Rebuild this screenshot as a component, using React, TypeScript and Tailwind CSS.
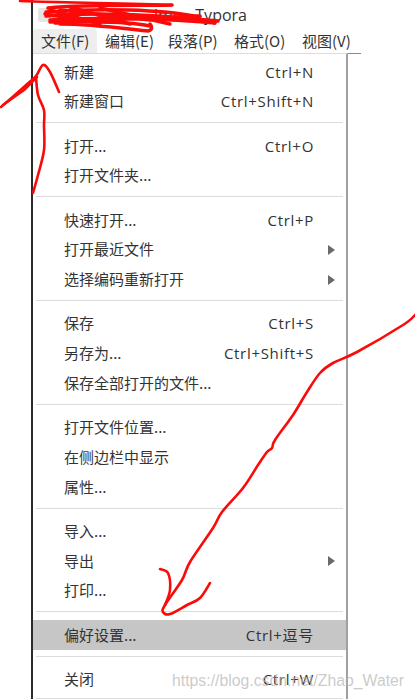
const font = { fontFamily: '"Noto Sans CJK SC", "Open Sans", sans-serif' };

type Row = { label: string; key?: string; sub?: boolean; active?: boolean };

const groups: Row[][] = [
  [{ label: "新建", key: "Ctrl+N" }, { label: "新建窗口", key: "Ctrl+Shift+N" }],
  [{ label: "打开...", key: "Ctrl+O" }, { label: "打开文件夹..." }],
  [{ label: "快速打开...", key: "Ctrl+P" }, { label: "打开最近文件", sub: true }, { label: "选择编码重新打开", sub: true }],
  [{ label: "保存", key: "Ctrl+S" }, { label: "另存为...", key: "Ctrl+Shift+S" }, { label: "保存全部打开的文件..." }],
  [{ label: "打开文件位置..." }, { label: "在侧边栏中显示" }, { label: "属性..." }],
  [{ label: "导入..." }, { label: "导出", sub: true }, { label: "打印..." }],
  [{ label: "偏好设置...", key: "Ctrl+逗号", active: true }],
  [{ label: "关闭", key: "Ctrl+W" }],
];

const menus = [
  { t: "文件(F)", c: "w-[64px] pl-[8px] bg-[#eeeeee] rounded-t-[3px]" },
  { t: "编辑(E)", c: "w-[63px] pl-[8px]" },
  { t: "段落(P)", c: "w-[65px] pl-[8px]" },
  { t: "格式(O)", c: "w-[68px] pl-[9px]" },
  { t: "视图(V)", c: "w-[68px] pl-[9px]" },
];

function smooth(p: number[][]) {
  let d = `M${p[0][0]} ${p[0][1]}`;
  for (let i = 0; i < p.length - 1; i++) {
    const a = p[Math.max(i - 1, 0)], b = p[i], c = p[i + 1], e = p[Math.min(i + 2, p.length - 1)];
    d += `C${b[0] + (c[0] - a[0]) / 6} ${b[1] + (c[1] - a[1]) / 6} ${c[0] - (e[0] - b[0]) / 6} ${c[1] - (e[1] - b[1]) / 6} ${c[0]} ${c[1]}`;
  }
  return d;
}

const bigArrow = [[415, 315], [403, 325], [357, 352], [333, 363], [320, 373], [307, 392], [293, 415], [275, 440], [272, 448], [267, 452], [258, 465], [243, 488], [222, 512], [213, 528], [190, 562], [182, 580], [165, 605], [163, 612], [170, 614], [187, 605], [200, 598], [210, 583]];
const bigHead = [[160, 569], [168, 573], [170, 590], [165, 605]];
const leftShaft = [[36, 77], [38, 95], [44, 110], [44, 125], [44, 150], [38, 175], [33, 193]];
const leftHead = [[1, 107], [25, 86], [36, 76], [43, 65], [50, 72], [59, 92]];

function MenuRow({ r }: { r: Row }) {
  return (
    <div className={`h-[29.7px] flex items-center pl-[31px] pr-[32px] relative ${r.active ? "bg-[#c6c6c6]" : ""}`}>
      <span className="flex-1 whitespace-nowrap">{r.label}</span>
      {r.key && <span className="whitespace-nowrap tracking-[0.7px]" style={{ fontFamily: '"Open Sans", "Noto Sans CJK SC", sans-serif' }}>{r.key}</span>}
      {r.sub && <span className="absolute right-[11px] top-[10px] w-0 h-0 border-y-[5px] border-y-transparent border-l-[7px] border-l-[#6a6a6a]" />}
    </div>
  );
}

export default function App() {
  return (
    <div className="w-[415px] h-[699px] bg-white overflow-hidden relative text-[15px] text-[#333333]" style={font}>
      <div className="ml-[31px] w-[384px] h-[699px] border-l-[2px] border-[#2b2b2b] flex flex-col">
        <div className="h-[29px] flex items-center pl-[5px] shrink-0">
          <div className="w-[13px] h-[14px] bg-[#e4e4e4] rounded-[2px]" />
          <span className="ml-[10px] pl-[93px] whitespace-nowrap text-[16px]" style={{ fontFamily: '"Open Sans", sans-serif' }}>ime - Typora</span>
        </div>
        <div className="h-[25px] w-[328px] shrink-0 flex border-b border-[#8a8a8a]">
          {menus.map((m) => (
            <div key={m.t} className={`h-[24px] flex items-center whitespace-nowrap ${m.c}`}>{m.t}</div>
          ))}
        </div>
        <div className="w-[315px] flex-1 min-h-0 -mt-[1px] bg-white border-t border-[#dddddd] border-r-[2px] border-r-[#a0a0a0] pt-[3px] overflow-hidden">
          {groups.map((g, i) => (
            <div key={i}>
              {i > 0 && (
                <div className="h-[14.7px] px-[3px] pt-[6px]">
                  <div className="h-[1px] bg-[#dcdcdc]" />
                </div>
              )}
              {g.map((r) => (
                <MenuRow key={r.label} r={r} />
              ))}
            </div>
          ))}
          <div className="h-[14.7px] px-[3px] pt-[4px]">
            <div className="h-[1px] bg-[#dcdcdc]" />
          </div>
        </div>
      </div>

      <svg className="absolute left-0 top-0 pointer-events-none" width="415" height="699" fill="none" stroke="#fb0a0a" strokeLinecap="round" strokeLinejoin="round">
        <g strokeWidth="2.6">
          <path d={smooth(leftShaft)} />
          <path d={smooth(leftHead)} />
          <path d="M3 105L24 90L37 77" />
          <path d={smooth(bigArrow)} />
          <path d={smooth(bigHead)} />
          <path d="M20 1C70 3 130 3 172 5" />
        </g>
        <g strokeWidth="3.5">
          <path d="M48 8C90 4 140 6 172 5M46 12C100 8 160 9 200 17M46 16C90 12 150 14 218 21M50 20C100 17 170 19 215 23M55 23C100 21 130 22 150 26M60 24C90 24 120 28 148 31C153 30 152 26 150 24" />
          <path d="M50 10L100 24M70 7L130 24M100 8L170 24M45 14C70 18 90 22 120 18M60 10L150 20M50 22L200 16" />
        </g>
      </svg>

      <div className="absolute left-[172px] top-[669px] text-[15.8px] text-[#b4b4b4]/70 whitespace-nowrap" style={{ fontFamily: '"Liberation Sans", sans-serif' }}>
        https://blog.csdn.net/Zhao_Water
      </div>
    </div>
  );
}
